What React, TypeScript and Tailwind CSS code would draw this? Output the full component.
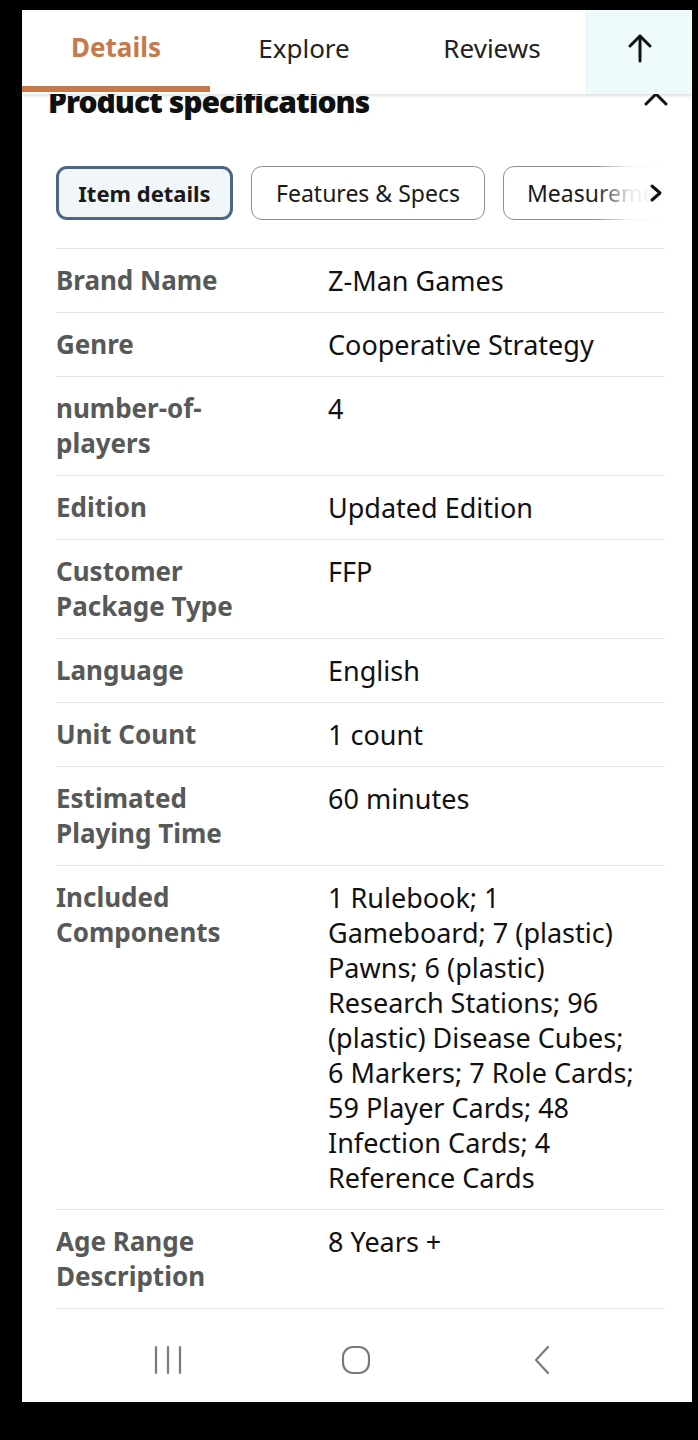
import React from "react";

const rows: { label: string[]; value: string[] }[] = [
  { label: ["Brand Name"], value: ["Z-Man Games"] },
  { label: ["Genre"], value: ["Cooperative Strategy"] },
  { label: ["number-of-", "players"], value: ["4"] },
  { label: ["Edition"], value: ["Updated Edition"] },
  { label: ["Customer", "Package Type"], value: ["FFP"] },
  { label: ["Language"], value: ["English"] },
  { label: ["Unit Count"], value: ["1 count"] },
  { label: ["Estimated", "Playing Time"], value: ["60 minutes"] },
  {
    label: ["Included", "Components"],
    value: [
      "1 Rulebook; 1",
      "Gameboard; 7 (plastic)",
      "Pawns; 6 (plastic)",
      "Research Stations; 96",
      "(plastic) Disease Cubes;",
      "6 Markers; 7 Role Cards;",
      "59 Player Cards; 48",
      "Infection Cards; 4",
      "Reference Cards",
    ],
  },
  { label: ["Age Range", "Description"], value: ["8 Years +"] },
];

export default function App() {
  return (
    <div
      className="min-h-[1440px] w-[698px] bg-black pt-[10px] pl-[22px]"
      style={{ fontFamily: '"Noto Sans", "Open Sans", Arial, sans-serif' }}
    >
      <div className="w-[670px] h-[1392px] bg-white flex flex-col overflow-hidden">
        {/* Tab header */}
        <div className="relative z-10 h-[84px] flex bg-white shadow-[0_2px_3px_rgba(0,0,0,0.12)]">
          <div className="w-[188px] flex flex-col">
            <div className="flex-1 flex items-center justify-center pb-[2px] text-[26px] font-bold text-[#c47a4c]">
              Details
            </div>
            <div className="h-[6px] bg-[#c9784a] mb-[2px]" />
          </div>
          <div className="w-[188px] flex items-center justify-center pb-[8px] text-[26px] text-[#222]">
            Explore
          </div>
          <div className="w-[188px] flex items-center justify-center pb-[8px] text-[26px] text-[#222]">
            Reviews
          </div>
          <div className="flex-1 flex items-center justify-center pb-[8px] bg-[#effafc] border-l border-[#e3eef0]">
            <svg width="28" height="30" viewBox="0 0 28 30" fill="none" stroke="#111" strokeWidth="3" strokeLinecap="round" strokeLinejoin="round">
              <path d="M14 28V3" />
              <path d="M4 13L14 3l10 10" />
            </svg>
          </div>
        </div>

        {/* Heading */}
        <div className="-mt-[10px] pl-[26px] pr-[23px] flex items-center justify-between">
          <div className="text-[30px] leading-[36px] font-black text-[#0f1111] tracking-[-1px]">
            Product specifications
          </div>
          <svg width="26" height="16" viewBox="0 0 26 16" fill="none" stroke="#111" strokeWidth="3" strokeLinecap="round" strokeLinejoin="round" className="mt-[-6px]">
            <path d="M3 13L13 3l10 10" />
          </svg>
        </div>

        {/* Content */}
        <div className="pl-[34px] pr-[27px]">
          {/* Pills */}
          <div className="relative mt-[46px] h-[54px] flex gap-[18px] overflow-hidden">
            <div className="shrink-0 w-[177px] h-[54px] rounded-[11px] border-[3px] border-[#4d6683] bg-[#f1f6fa] flex items-center justify-center text-[22px] font-bold text-[#1a1a1a]">
              Item details
            </div>
            <div className="shrink-0 w-[234px] h-[54px] rounded-[11px] border border-[#8f8f8f] flex items-center justify-center text-[23px] text-[#1a1a1a]">
              Features &amp; Specs
            </div>
            <div className="shrink-0 w-[220px] h-[54px] rounded-[11px] border border-[#8f8f8f] flex items-center pl-[23px] text-[23px] text-[#1a1a1a]">
              Measurements
            </div>
            <div className="absolute right-0 top-0 h-[54px] w-[70px] bg-gradient-to-r from-white/0 via-white/90 to-white" />
            <svg className="absolute right-[2px] top-[17px]" width="14" height="20" viewBox="0 0 14 20" fill="none" stroke="#111" strokeWidth="3" strokeLinecap="round" strokeLinejoin="round">
              <path d="M3 3l8 7-8 7" />
            </svg>
          </div>

          {/* Rows */}
          <div className="mt-[28px] border-b border-[#e4e4e4]">
            {rows.map((r, i) => (
              <div key={i} className="flex border-t border-[#e4e4e4] py-[14px] leading-[35px]">
                <div className="w-[272px] shrink-0 text-[26px] font-bold text-[#575959]">
                  {r.label.map((l, j) => (
                    <div key={j}>{l}</div>
                  ))}
                </div>
                <div className="flex-1 text-[27px] text-[#111]">
                  {r.value.map((v, j) => (
                    <div key={j}>{v}</div>
                  ))}
                </div>
              </div>
            ))}
          </div>
        </div>

        {/* Nav bar */}
        <div className="flex-1 flex items-center pt-[8px]">
          <svg className="ml-[131px]" width="30" height="30" viewBox="0 0 30 30" fill="none" stroke="#7b7b7b" strokeWidth="2.2" strokeLinecap="round">
            <path d="M3 2v26M15 2v26M27 2v26" />
          </svg>
          <svg className="ml-[158px]" width="30" height="30" viewBox="0 0 30 30" fill="none" stroke="#7b7b7b" strokeWidth="2.2">
            <rect x="2" y="2" width="26" height="26" rx="10" />
          </svg>
          <svg className="ml-[161px]" width="20" height="30" viewBox="0 0 20 30" fill="none" stroke="#7b7b7b" strokeWidth="2.2" strokeLinecap="round" strokeLinejoin="round">
            <path d="M16 2L4 15l12 13" />
          </svg>
        </div>
      </div>
    </div>
  );
}
